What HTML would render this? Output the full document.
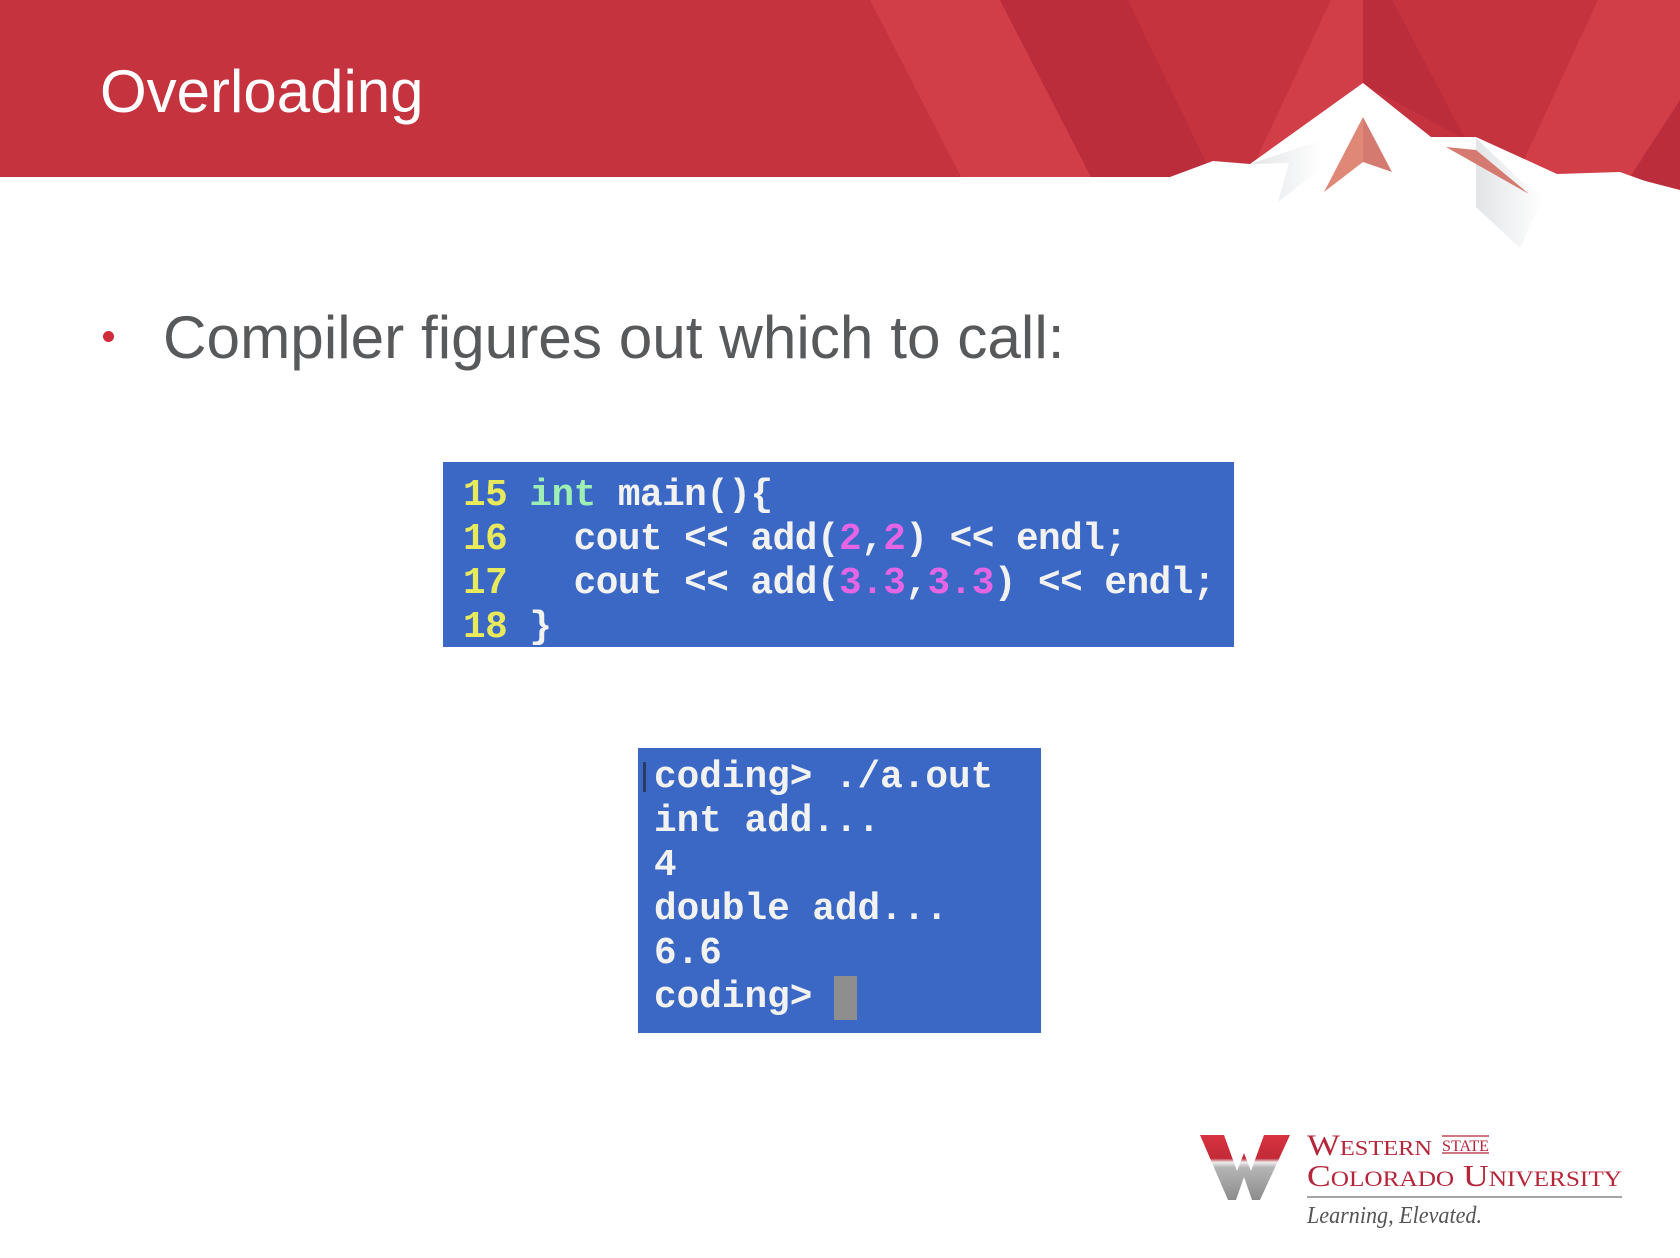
<!DOCTYPE html>
<html><head><meta charset="utf-8"><style>
html,body{margin:0;padding:0;background:#fff}
body{width:1680px;height:1258px;position:relative;overflow:hidden;font-family:"Liberation Sans",Arial,sans-serif}
.abs{position:absolute}
.mono{font-family:"Liberation Mono","DejaVu Sans Mono",monospace;font-size:37.7px;line-height:44px;white-space:pre;color:#f2f2f2;font-weight:bold}
</style></head><body>
<svg class="abs" style="left:0;top:0" width="1680" height="260" viewBox="0 0 1680 260">
<defs>
<linearGradient id="g1" x1="0" y1="0" x2="1" y2="0"><stop offset="0" stop-color="#e2e4e6"/><stop offset="1" stop-color="#fff"/></linearGradient>
</defs>
<rect x="0" y="0" width="1680" height="177" fill="#c5333f"/>
<polygon points="870,0 1000,0 1091,177 961,177" fill="#d13e47"/>
<polygon points="1000,0 1128,0 1213,177 1091,177" fill="#bb2d3b"/>
<polygon points="1331,0 1363,0 1363,100 1248,177" fill="#d13e47"/>
<polygon points="1363,0 1392,0 1466,140 1363,84" fill="#bb2d3b"/>
<polygon points="1598,0 1680,0 1680,100 1633,177 1516,177" fill="#d13e47"/>
<polygon points="1680,100 1680,190 1630,177" fill="#bb2d3b"/>
<polygon points="1100,177 1170,177 1213,161 1250,164 1363,83 1431,137 1476,137 1557,174 1620,172 1670,190 1680,190 1680,260 1100,260" fill="#fff"/>
<polygon points="1250,164 1289,163 1278,202 1322,168 1322,140" fill="url(#g1)"/>
<polygon points="1476,138 1476,207 1520,248 1544,197 1520,180" fill="url(#g1)"/>
<polygon points="1363,117 1324,192 1363,162" fill="#e08878"/>
<polygon points="1363,117 1363,162 1392,172" fill="#d47a70"/>
<polygon points="1446,147 1529,194 1476,150" fill="#d47a70"/>
</svg>
<div class="abs" style="left:100px;top:57px;font-size:60px;color:#fff;line-height:70px">Overloading</div>
<div class="abs" style="left:103px;top:331px;width:11px;height:11px;border-radius:50%;background:#d02c3c"></div>
<div class="abs" style="left:163px;top:302px;font-size:60.3px;color:#58595b;line-height:70px">Compiler figures out which to call:</div>

<div class="abs" style="left:443px;top:462px;width:791px;height:185px;background:#3a68c4"></div>
<div class="abs mono" style="left:463px;top:474px;letter-spacing:-0.5px"><span style="color:#e9e95c">15</span> <span style="color:#9fefb4">int</span> main(){
<span style="color:#e9e95c">16</span>   cout &lt;&lt; add(<span style="color:#e565e5">2</span>,<span style="color:#e565e5">2</span>) &lt;&lt; endl;
<span style="color:#e9e95c">17</span>   cout &lt;&lt; add(<span style="color:#e565e5">3.3</span>,<span style="color:#e565e5">3.3</span>) &lt;&lt; endl;
<span style="color:#e9e95c">18</span> }</div>

<div class="abs" style="left:638px;top:748px;width:403px;height:285px;background:#3a68c4"></div>
<div class="abs" style="left:643px;top:762px;width:3px;height:30px;background:#2a3a60"></div>
<div class="abs mono" style="left:654px;top:756px">coding&gt; ./a.out
int add...
4
double add...
6.6
coding&gt;</div>
<div class="abs" style="left:834px;top:976px;width:23px;height:44px;background:#8e8e8e"></div>

<svg class="abs" style="left:1190px;top:1125px" width="110" height="85" viewBox="0 0 110 85">
<defs><linearGradient id="wg" x1="0" y1="0" x2="0" y2="1">
<stop offset="0" stop-color="#d8323f"/><stop offset="0.36" stop-color="#c22a38"/><stop offset="0.42" stop-color="#eeeeee"/><stop offset="0.5" stop-color="#b5b5b5"/><stop offset="1" stop-color="#8c8c8c"/></linearGradient></defs>
<polygon points="10,10 34,10 47,46 54,28 61,46 74,10 100,10 70,75 62,75 54,52 46,75 38,75" fill="url(#wg)"/>
</svg>
<svg class="abs" style="left:1300px;top:1125px" width="340" height="110" viewBox="0 0 340 110">
<text x="7" y="30" fill="#b5263a" font-family="Liberation Serif,serif" font-size="30" style="font-variant:small-caps" textLength="125" lengthAdjust="spacingAndGlyphs">Western</text>
<line x1="142" y1="11" x2="189" y2="11" stroke="#b5263a" stroke-width="1.2"/>
<line x1="142" y1="28" x2="189" y2="28" stroke="#b5263a" stroke-width="1.2"/>
<text x="142" y="26" fill="#b5263a" font-family="Liberation Serif,serif" font-size="16" textLength="47" lengthAdjust="spacingAndGlyphs">STATE</text>
<text x="7" y="61" fill="#b5263a" font-family="Liberation Serif,serif" font-size="31" style="font-variant:small-caps" textLength="315" lengthAdjust="spacingAndGlyphs">Colorado University</text>
<line x1="7" y1="72" x2="322" y2="72" stroke="#888" stroke-width="1.5"/>
<text x="7" y="98" fill="#555" font-family="Liberation Serif,serif" font-style="italic" font-size="24" textLength="175" lengthAdjust="spacingAndGlyphs">Learning, Elevated.</text>
</svg>
</body></html>
